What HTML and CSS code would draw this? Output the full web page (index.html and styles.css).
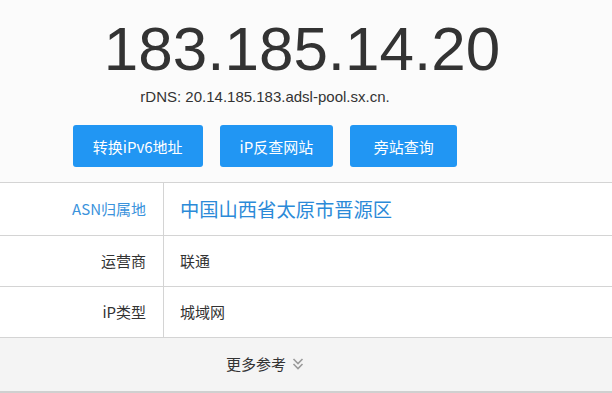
FILE: index.html
```html
<!DOCTYPE html>
<html lang="zh-CN">
<head>
    <meta charset="UTF-8">
    <meta name="viewport" content="width=device-width, initial-scale=1.0">
    <title>183.185.14.20 - IP查询</title>
    <link rel="stylesheet" href="styles.css">
</head>
<body>
    <div class="hero">
        <h1 class="ip">183.185.14.20</h1>
        <div class="sub">
            <p class="rdns">rDNS: 20.14.185.183.adsl-pool.sx.cn.</p>
            <div class="actions">
                <a class="btn" href="#">转换iPv6地址</a>
                <a class="btn" href="#">iP反查网站</a>
                <a class="btn" href="#">旁站查询</a>
            </div>
        </div>
    </div>

    <div class="info">
        <div class="row row-first">
            <div class="label label-blue">ASN归属地</div>
            <div class="value value-big">中国山西省太原市晋源区</div>
        </div>
        <div class="row">
            <div class="label">运营商</div>
            <div class="value">联通</div>
        </div>
        <div class="row">
            <div class="label">iP类型</div>
            <div class="value">城域网</div>
        </div>
        <div class="more">
            <span>更多参考</span>
            <svg class="chev" width="12" height="14" viewBox="0 0 12 14">
                <polyline points="1.5,2 6,6.5 10.5,2" fill="none" stroke="#9a9a9a" stroke-width="1.6"/>
                <polyline points="1.5,7 6,11.5 10.5,7" fill="none" stroke="#9a9a9a" stroke-width="1.6"/>
            </svg>
        </div>
    </div>
</body>
</html>
```

FILE: styles.css
```css
body {
    margin: 0;
    background-color: #fbfbfb;
    font-family: "Liberation Sans", "Noto Sans CJK SC", sans-serif;
    color: #333;
}
.hero {
    padding: 18px 0 15px;
    text-align: center;
}
.ip {
    margin: 0;
    padding-right: 8px;
    font-size: 62px;
    font-weight: normal;
    line-height: 62px;
    color: #333;
}
.sub {
    padding-right: 82px;
}
.rdns {
    margin: 6px 0 0;
    font-size: 15px;
    line-height: 22px;
    color: #333;
}
.actions {
    display: flex;
    justify-content: center;
    gap: 17px;
    margin-top: 17px;
}
.btn {
    display: flex;
    align-items: center;
    justify-content: center;
    min-width: 67px;
    height: 42px;
    padding: 0 20px;
    background-color: #2196f3;
    color: #fff;
    border-radius: 3px;
    font-family: "Noto Sans CJK SC", sans-serif;
    font-size: 15px;
    text-decoration: none;
}
.info {
    background: #fff;
    border-top: 1px solid #d4d4d4;
}
.row {
    display: flex;
    border-bottom: 1px solid #d4d4d4;
}
.label {
    width: 146px;
    padding-right: 17px;
    border-right: 1px solid #d4d4d4;
    text-align: right;
    font-family: "Noto Sans CJK SC", sans-serif;
    font-size: 15px;
    line-height: 50px;
    color: #333;
}
.row-first .label,
.row-first .value {
    line-height: 52px;
}
.label-blue {
    color: #3b93dc;
}
.value {
    padding-left: 16px;
    font-family: "Noto Sans CJK SC", sans-serif;
    font-size: 15px;
    line-height: 50px;
    color: #333;
}
.value-big {
    font-size: 19.3px;
    color: #2b8ad8;
}
.more {
    display: flex;
    align-items: center;
    justify-content: center;
    gap: 6px;
    height: 50px;
    padding: 0 82px 3px 0;
    background: #f4f4f4;
    border-bottom: 2px solid #d0d0d0;
    font-family: "Noto Sans CJK SC", sans-serif;
    font-size: 15px;
    color: #333;
}
.chev {
    display: block;
    margin-top: 2px;
}
```
